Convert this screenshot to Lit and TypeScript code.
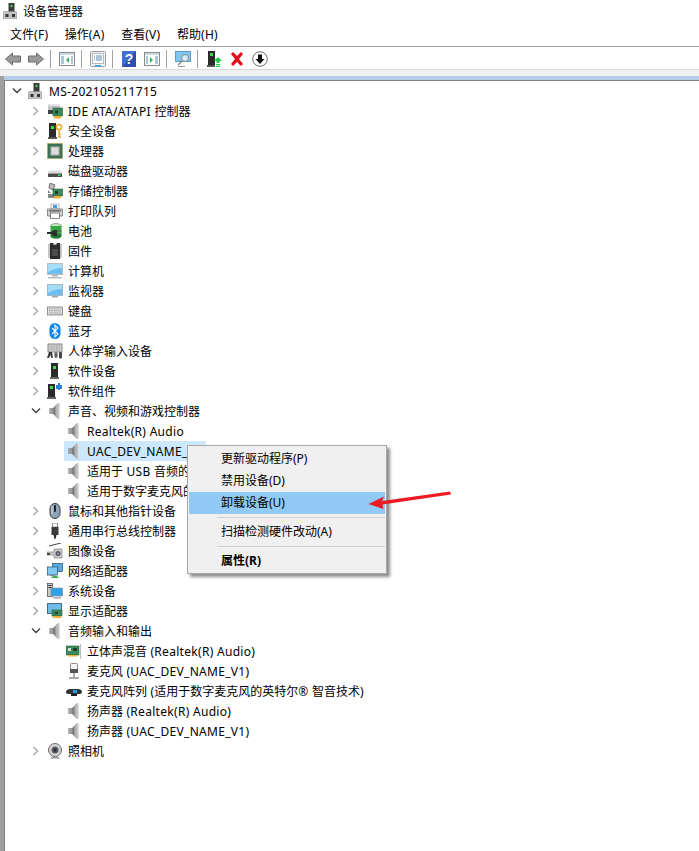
import { LitElement, html, css, svg, nothing } from "lit";
import { customElement } from "lit/decorators.js";

const ic = (body: unknown, w = 16, h = 16) => html`<svg class="ic" width=${w} height=${h} viewBox="0 0 16 16">${body}</svg>`;

const I: Record<string, unknown> = {
  root: svg`<rect x="5.500" y="0" width="6" height="9" fill="#3c3c3c"/><rect x="7.500" y="2" width="2" height="2" fill="#35e04a"/><path d="M1.500 8.500h11a1 1 0 0 1 1 1V16H.5V9.500a1 1 0 0 1 1-1z" fill="#c4c4c4" stroke="#8a8a8a" stroke-width=".6"/><rect x="2.500" y="11" width="3" height="3" fill="#333"/><rect x="9" y="11" width="3" height="3" fill="#333"/>`,
  ide: svg`<path d="M1 1h12v6H1z" fill="#c4c4c4"/><path d="M1 1h12v2H1z" fill="#e4e4e4"/><path d="M1 7h6v4H1z" fill="#3f3f3f"/><rect x="6" y="5" width="9.500" height="8" fill="#3d8a5a" stroke="#245c3a" stroke-width=".6"/><rect x="8" y="7.500" width="3" height="3" fill="#1f3d2a"/><rect x="7" y="13" width="7" height="2.500" fill="#f2b035"/>`,
  sec: svg`<rect x="2" y="0" width="7" height="16" fill="#2b2b2b"/><rect x="1" y="14" width="9" height="2" fill="#555"/><rect x="4" y="3" width="3" height="3" fill="#35e04a"/><circle cx="12" cy="4" r="2.600" fill="none" stroke="#e5a92e" stroke-width="1.500"/><path d="M12 6.500V15M12 11h2M12 14h2" stroke="#e5a92e" stroke-width="1.400" fill="none"/>`,
  cpu: svg`<rect x="0.500" y="0.500" width="15" height="15" fill="#3c6e50" stroke="#b9a044" stroke-width="1" stroke-dasharray="1 1"/><rect x="1.500" y="1.500" width="13" height="13" fill="#3f7355"/><rect x="4" y="4" width="8" height="8" fill="#dcdcdc" stroke="#b0b0b0"/>`,
  disk: svg`<path d="M2 7.500h12l1.500 3H.5z" fill="#dcdcdc"/><rect x="1" y="10.500" width="14" height="3.500" fill="#4c4c4c"/><rect x="11" y="11.500" width="2.500" height="1.500" fill="#3ce04f"/>`,
  store: svg`<path d="M3 0l5 2-2 5-4-2z" fill="#bcbcbc" stroke="#555" stroke-width=".8"/><path d="M1 7l3 3H1zM1 11h6v4H1z" fill="#888"/><rect x="6" y="6" width="9.500" height="7" fill="#3d8a5a" stroke="#245c3a" stroke-width=".6"/><rect x="8" y="8" width="3" height="3" fill="#1f3d2a"/><rect x="7" y="13" width="7" height="2.500" fill="#f2b035"/>`,
  print: svg`<path d="M4 1h8v5H4z" fill="#fff" stroke="#999" stroke-width=".7"/><path d="M6 2h4v3H6z" fill="#3aa0e0"/><path d="M.5 6h15v7H.5z" fill="#d4d4d4" stroke="#6e6e6e" stroke-width=".8"/><rect x="3.500" y="10" width="9" height="5.500" fill="#fff" stroke="#6a6a6a" stroke-width=".8"/><rect x="2" y="7.300" width="12" height="1.200" fill="#4a4a4a"/>`,
  bat: svg`<ellipse cx="9" cy="3" rx="5.500" ry="2.500" fill="#bfe8c2" stroke="#555" stroke-width=".5"/><rect x="3.500" y="3" width="11" height="10" fill="#34a845"/><ellipse cx="9" cy="13" rx="5.500" ry="2.800" fill="#1d7d2e"/><path d="M0 9h4l3-2h3v6H7L4 11H0z" fill="#2c2c2c"/><path d="M10 8h4.500M10 12h4.500" stroke="#555" stroke-width="1.200"/>`,
  chip: svg`<rect x="3" y="0" width="10" height="16" fill="#2c2c2c"/><path d="M6 0a2 2 0 0 0 4 0z" fill="#dcdcdc"/><path d="M1 2h2M1 4h2M1 6h2M1 8h2M1 10h2M1 12h2M1 14h2M13 2h2M13 4h2M13 6h2M13 8h2M13 10h2M13 12h2M13 14h2" stroke="#8a8a8a" stroke-width="1"/><rect x="5" y="6" width="6" height="7" fill="#4c4c4c"/>`,
  pc: svg`<rect x="0.500" y="0.500" width="15" height="11" fill="#6cbdf0" stroke="#bcbcbc"/><path d="M1 1h14v4C9 5 5 7 1 9z" fill="#a5dcf8"/><rect x="5" y="12" width="6" height="1.500" fill="#b5b5b5"/><rect x="1" y="14" width="14" height="1.500" fill="#bcbcbc"/>`,
  mon: svg`<rect x="0.500" y="1.500" width="15" height="11" fill="#6cbdf0" stroke="#9fb8c8"/><path d="M1 2h14v4C9 6 5 8 1 10z" fill="#a5dcf8"/><rect x="5" y="13" width="6" height="1.500" fill="#a8a8a8"/>`,
  kbd: svg`<rect x="0.500" y="4" width="15" height="8" fill="#e2e2e2" stroke="#7a7a7a" stroke-width=".8"/><path d="M2 5.800h12M2 7.500h12M2 9.200h12M2 10.800h12" stroke="#9a9a9a" stroke-width=".9" stroke-dasharray="1 .6"/>`,
  bt: svg`<rect x="2.500" y="0" width="11" height="16" rx="5.500" fill="#0a84ef"/><path d="M5 5l6 6-3 3V2l3 3-6 6" fill="none" stroke="#fff" stroke-width="1.100"/>`,
  hid: svg`<rect x="1" y="1" width="14" height="8" fill="#d8d8d8" stroke="#6e6e6e" stroke-width=".8"/><path d="M2.500 3h11M2.500 5h11M2.500 7h11" stroke="#8a8a8a" stroke-dasharray="1 .6"/><path d="M0 15l2-6h3l1 6h-1.500L3.500 12 2 15z" fill="#3c3c3c"/><ellipse cx="9" cy="12" rx="1.800" ry="3" fill="#6a6a6a"/><rect x="12" y="9" width="3" height="6.500" rx="1" fill="#444"/>`,
  sw: svg`<rect x="4" y="0" width="7" height="14" fill="#2b2b2b"/><rect x="3" y="14" width="9" height="2" fill="#666"/><rect x="6" y="3" width="3" height="3" fill="#35e04a"/>`,
  comp: svg`<rect x="1" y="1" width="7" height="13" fill="#2b2b2b"/><rect x="0" y="14" width="9" height="2" fill="#666"/><rect x="3" y="3" width="3" height="3" fill="#35e04a"/><path d="M9 2h2V0h2v2h2v4h-2v1h-2V6H9z" fill="#2a7fd4"/>`,
  spk: svg`<rect x="2.500" y="5" width="1" height="6" fill="#6e6e6e"/><rect x="3.500" y="5" width="2.500" height="6" fill="#9c9c9c"/><path d="M6 5l5.500-5v16L6 11z" fill="#7e7e7e"/><path d="M8.500 2.300L11.500 0v16l-3-2.300z" fill="#b4b4b4"/><path d="M11.500 0H13v16h-1.500z" fill="#dcdcdc"/>`,
  mouse: svg`<rect x="3" y="0.500" width="10" height="15" rx="5" fill="#8fa3b8" stroke="#3a3a3a" stroke-width="1"/><rect x="7" y="2" width="2" height="7" rx="1" fill="#222"/><path d="M5 3v8" stroke="#d5dee6" stroke-width="1"/>`,
  usb: svg`<rect x="5.500" y="0" width="5" height="4" fill="none" stroke="#8a8a8a"/><rect x="4.500" y="4" width="7" height="8" fill="#3d3d3d"/><path d="M6.500 12h3l-1 4h-1z" fill="#2a2a2a"/>`,
  cam: svg`<path d="M2 3l12-3" stroke="#444" stroke-width="1"/><path d="M0 9h7V6h8v9H7v-3H0z" fill="#c8c8c8" stroke="#777" stroke-width=".6"/><circle cx="11" cy="10.500" r="2.500" fill="#555"/><circle cx="11" cy="10.500" r="1" fill="#aad"/><rect x="0" y="10" width="3" height="2" fill="#444"/>`,
  net: svg`<rect x="5.500" y="0.500" width="10" height="8" fill="#58a9dd" stroke="#355f80" stroke-width=".8"/><rect x="0.500" y="4" width="10" height="8" fill="#7fc8ef" stroke="#355f80" stroke-width=".8"/><rect x="3" y="12" width="5" height="1.200" fill="#888"/><path d="M4 15l2-2h4l2 2z" fill="#3cb44f"/>`,
  sys: svg`<rect x="0.500" y="0.500" width="5" height="13" fill="#c8c8c8" stroke="#555" stroke-width=".8"/><rect x="1.500" y="2" width="3" height="1" fill="#333"/><rect x="1.500" y="4" width="3" height="1" fill="#333"/><rect x="4" y="5" width="11.500" height="8" fill="#2f9fe8" stroke="#888" stroke-width=".6"/><rect x="6" y="14" width="8" height="1.500" fill="#a8a8a8"/>`,
  disp: svg`<rect x="0.500" y="0.500" width="14" height="10" fill="#6fbce8" stroke="#4a6a80"/><rect x="5" y="7" width="10" height="6" fill="#3d8a5a" stroke="#245c3a" stroke-width=".6"/><rect x="8" y="9" width="3" height="2" fill="#1f3d2a"/><rect x="6" y="13" width="8" height="2" fill="#f2b035"/>`,
  mix: svg`<rect x="0" y="3" width="13" height="9" fill="#3d8a5a" stroke="#245c3a" stroke-width=".6"/><rect x="2" y="5" width="3" height="3" fill="#d8d8d8"/><rect x="7" y="5" width="4" height="3" fill="#1f3d2a"/><rect x="2" y="12" width="9" height="1.500" fill="#f2b035"/><path d="M14.500 1v15" stroke="#bdbdbd"/>`,
  mic: svg`<rect x="4.500" y="0.500" width="7" height="9" rx="1" fill="#f4f4f4" stroke="#8a8a8a"/><rect x="4" y="6" width="8" height="4" fill="#555"/><path d="M8 10v4M3 15h10" stroke="#555" stroke-width="1"/>`,
  arr: svg`<path d="M0 9c0-2 2-3 4-3h8c2 0 4 1 4 3s-2 2-4 2H4C2 11 0 11 0 9z" fill="#333"/><rect x="7" y="7" width="4" height="3" fill="#1ea0e8"/><path d="M5 11h6v2H5z" fill="#222"/>`,
  web: svg`<circle cx="8" cy="7" r="6.500" fill="#d4d4d4" stroke="#6a6a6a"/><circle cx="8" cy="7" r="3.500" fill="#5a5a5a"/><circle cx="8" cy="7" r="1.500" fill="#1a2a3a"/><path d="M3 15.500h10l-2-2H5z" fill="#9a9a9a"/>`,
};

const T: Record<string, unknown> = {
  back: svg`<path d="M.5 8l7-6v3h8v6h-8v3z" fill="#9a9a9a" stroke="#6c6c6c"/>`,
  fwd: svg`<path d="M15.500 8l-7-6v3h-8v6h8v3z" fill="#9a9a9a" stroke="#6c6c6c"/>`,
  tree1: svg`<rect x=".5" y="1.500" width="15" height="13" fill="#fff" stroke="#8a8a8a"/><rect x="1" y="2" width="14" height="2" fill="#c8d8e4"/><path d="M2 6h3M2 8h3M2 10h3M2 12h3M12 6h2M12 8h2M12 10h2M12 12h2" stroke="#5a8ab0"/><path d="M10 6v6L7 9z" fill="#2fb55a"/>`,
  props: svg`<rect x=".5" y=".5" width="15" height="15" rx="1" fill="#f0f4f8" stroke="#9a9a9a"/><rect x="2.500" y="2.500" width="11" height="10" fill="#fff" stroke="#b8b8b8"/><path d="M4 5h1M6 5h6M4 7h1M6 7h6M4 9h1M6 9h6" stroke="#5a8ab0"/><rect x="5" y="14" width="6" height="1.500" fill="#35a0e0"/>`,
  help: svg`<rect x="1" y="0" width="14" height="16" fill="#2a4fb0"/><path d="M1 0h14L1 16z" fill="#3f6fd0"/><text x="8" y="13" text-anchor="middle" font-size="14" font-weight="700" font-family="Liberation Sans" fill="#fff">?</text>`,
  tree2: svg`<rect x=".5" y="1.500" width="15" height="13" fill="#fff" stroke="#8a8a8a"/><rect x="1" y="2" width="14" height="2" fill="#c8d8e4"/><path d="M11 6h3M11 8h3M11 10h3M11 12h3M2 6h2M2 8h2M2 10h2M2 12h2" stroke="#5a8ab0"/><path d="M6 6v6l3-3z" fill="#2fb55a"/>`,
  scan: svg`<rect x=".5" y=".5" width="15" height="10" fill="#7fc8ef" stroke="#5a9cc8"/><path d="M3 15.500h7" stroke="#9a9a9a" stroke-width="1"/><circle cx="10" cy="7" r="3.500" fill="#d4ecf8" stroke="#8a8a8a"/><path d="M7.500 9.500L3 14" stroke="#8a8a8a" stroke-width="1.400"/>`,
  update: svg`<rect x="2" y="0" width="7" height="14" fill="#2b2b2b"/><rect x="1" y="14" width="8" height="2" fill="#555"/><rect x="4" y="2" width="3" height="3" fill="#35e04a"/><path d="M12 6l4 4h-2.500v2h-3v-2H8z" fill="#1fc84a"/><path d="M10 13h4v1.200h-4zM10 15h4v1h-4z" fill="#1fc84a"/>`,
  del: svg`<path d="M2 3l2-2 4 4 4-4 2 2-4 5 4 5-2 2-4-4-4 4-2-2 4-5z" fill="#e00b1c"/>`,
  down: svg`<circle cx="8" cy="8" r="7.300" fill="#fff" stroke="#6a6a6a"/><path d="M6 3.500h4V8h2.500L8 13 3.500 8H6z" fill="#111"/>`,
};

const chevR = html`<svg width="8" height="10" viewBox="0 0 8 10"><path d="M1.500 1l4 4-4 4" fill="none" stroke="#a6a6a6" stroke-width="1.400"/></svg>`;
const chevD = html`<svg width="10" height="8" viewBox="0 0 10 8"><path d="M1 1.500l4 4 4-4" fill="none" stroke="#404040" stroke-width="1.400"/></svg>`;

/* Latin runs are set slightly wider so they take the width they have in the reference. */
const label = (t: string) =>
  t.split(/([\x00-\x7f®]+)/).map((p, i) => (i % 2 ? html`<span class="lat">${p}</span>` : p));

type Row = { l: number; c?: "r" | "d"; i: string; t: string; sel?: boolean };
const rows: Row[] = [
  { l: 0, c: "d", i: "root", t: "MS-202105211715" },
  { l: 1, c: "r", i: "ide", t: "IDE ATA/ATAPI 控制器" },
  { l: 1, c: "r", i: "sec", t: "安全设备" },
  { l: 1, c: "r", i: "cpu", t: "处理器" },
  { l: 1, c: "r", i: "disk", t: "磁盘驱动器" },
  { l: 1, c: "r", i: "store", t: "存储控制器" },
  { l: 1, c: "r", i: "print", t: "打印队列" },
  { l: 1, c: "r", i: "bat", t: "电池" },
  { l: 1, c: "r", i: "chip", t: "固件" },
  { l: 1, c: "r", i: "pc", t: "计算机" },
  { l: 1, c: "r", i: "mon", t: "监视器" },
  { l: 1, c: "r", i: "kbd", t: "键盘" },
  { l: 1, c: "r", i: "bt", t: "蓝牙" },
  { l: 1, c: "r", i: "hid", t: "人体学输入设备" },
  { l: 1, c: "r", i: "sw", t: "软件设备" },
  { l: 1, c: "r", i: "comp", t: "软件组件" },
  { l: 1, c: "d", i: "spk", t: "声音、视频和游戏控制器" },
  { l: 2, i: "spk", t: "Realtek(R) Audio" },
  { l: 2, i: "spk", t: "UAC_DEV_NAME_V1", sel: true },
  { l: 2, i: "spk", t: "适用于 USB 音频的" },
  { l: 2, i: "spk", t: "适用于数字麦克风的" },
  { l: 1, c: "r", i: "mouse", t: "鼠标和其他指针设备" },
  { l: 1, c: "r", i: "usb", t: "通用串行总线控制器" },
  { l: 1, c: "r", i: "cam", t: "图像设备" },
  { l: 1, c: "r", i: "net", t: "网络适配器" },
  { l: 1, c: "r", i: "sys", t: "系统设备" },
  { l: 1, c: "r", i: "disp", t: "显示适配器" },
  { l: 1, c: "d", i: "spk", t: "音频输入和输出" },
  { l: 2, i: "mix", t: "立体声混音 (Realtek(R) Audio)" },
  { l: 2, i: "mic", t: "麦克风 (UAC_DEV_NAME_V1)" },
  { l: 2, i: "arr", t: "麦克风阵列 (适用于数字麦克风的英特尔® 智音技术)" },
  { l: 2, i: "spk", t: "扬声器 (Realtek(R) Audio)" },
  { l: 2, i: "spk", t: "扬声器 (UAC_DEV_NAME_V1)" },
  { l: 1, c: "r", i: "web", t: "照相机" },
];

@customElement("app-root")
export class AppRoot extends LitElement {
  static styles = css`
    :host {
      display: block;
      position: relative;
      width: 699px;
      height: 851px;
      overflow: hidden;
      background: #fff;
      font: 12px/20px "Noto Sans", "Noto Sans CJK SC", sans-serif;
      color: #000;
    }
    .ic { display: block; flex: none; }
    .lat { letter-spacing: .3px; }
    .title { height: 23px; display: flex; align-items: center; gap: 4px; padding-left: 3px; }
    .title .ic { margin-top: -2px; }
    .menubar { height: 23px; display: flex; align-items: center; gap: 16.500px; padding-left: 10px; }
    .toolbar { height: 20px; padding: 2px 0 0 1px; border-top: 1px solid #a0a0a0; display: flex; align-items: center; }
    .btn { width: 23px; display: flex; justify-content: center; }
    .sep { width: 1px; height: 18px; background: #a0a0a0; margin: 0 4px 0 3px; }
    .band { height: 6px; background: #f0f0f0; border-top: 1px solid #d8d8d8; }
    .main { display: flex; height: 775px; }
    .strip { width: 4px; background: #a0a0a0; flex: none; }
    .col { flex: 1; display: flex; flex-direction: column; min-width: 0; }
    .blue { height: 4px; background: #b4cde8; flex: none; }
    .body { flex: 1; border-top: 1px solid #808080; border-left: 1px solid #808080; padding-left: 3px; }
    .row { height: 20px; display: flex; align-items: center; }
    .chev { width: 18px; height: 20px; flex: none; display: flex; align-items: center; justify-content: center; }
    .item { display: flex; align-items: center; gap: 5px; height: 20px; padding: 0 4px 0 2px; white-space: nowrap; }
    .item.sel { background: #cce8ff; }
    .text { padding-top: 2px; }
    .menu {
      position: absolute; left: 187px; top: 445px; width: 198px;
      padding: 2px 0 1px; background: #f0f0f0; border: 1px solid #a8a8a8;
      box-shadow: 3px 3px 3px rgba(0,0,0,.45);
      display: flex; flex-direction: column;
    }
    .mi { height: 22px; line-height: 22px; margin: 0 1px; padding-left: 32px; flex: none; white-space: nowrap; }
    .mi.hl { background: #91c9f7; }
    .mi.b { font-weight: 700; }
    .ms { height: 1px; background: #d0d0d0; margin: 3px 1px 3px 29px; flex: none; }
    .arrow { position: absolute; left: 366px; top: 488px; }
  `;

  render() {
    return html`
      <div class="title">${ic(I.root)}<span>设备管理器</span></div>
      <div class="menubar">
        <span>${label("文件(F)")}</span><span>${label("操作(A)")}</span><span>${label("查看(V)")}</span><span>${label("帮助(H)")}</span>
      </div>
      <div class="toolbar">
        <span class="btn">${ic(T.back)}</span><span class="btn">${ic(T.fwd)}</span><i class="sep"></i>
        <span class="btn">${ic(T.tree1)}</span><i class="sep"></i>
        <span class="btn">${ic(T.props)}</span><i class="sep"></i>
        <span class="btn">${ic(T.help)}</span><span class="btn">${ic(T.tree2)}</span><i class="sep"></i>
        <span class="btn">${ic(T.scan)}</span><i class="sep"></i>
        <span class="btn">${ic(T.update)}</span><span class="btn">${ic(T.del)}</span><span class="btn">${ic(T.down)}</span>
      </div>
      <div class="band"></div>
      <div class="main">
        <div class="strip"></div>
        <div class="col">
          <div class="blue"></div>
          <div class="body">
            ${rows.map(
              (r) => html`<div class="row" style="padding-left:${r.l * 19}px">
                <span class="chev">${r.c === "r" ? chevR : r.c === "d" ? chevD : nothing}</span>
                <span class="item ${r.sel ? "sel" : ""}">${ic(I[r.i])}<span class="text">${label(r.t)}</span></span>
              </div>`
            )}
          </div>
        </div>
      </div>
      <div class="menu">
        <div class="mi">更新驱动程序(P)</div>
        <div class="mi">禁用设备(D)</div>
        <div class="mi hl">卸载设备(U)</div>
        <div class="ms"></div>
        <div class="mi">扫描检测硬件改动(A)</div>
        <div class="ms"></div>
        <div class="mi b">属性(R)</div>
      </div>
      <svg class="arrow" width="90" height="24" viewBox="0 0 90 24">
        <path d="M2.500 16L18 8.500 16 13 84 3.500 85 6.500 16.500 16.500 17.500 21z" fill="#ef1b23"/>
      </svg>
    `;
  }
}
